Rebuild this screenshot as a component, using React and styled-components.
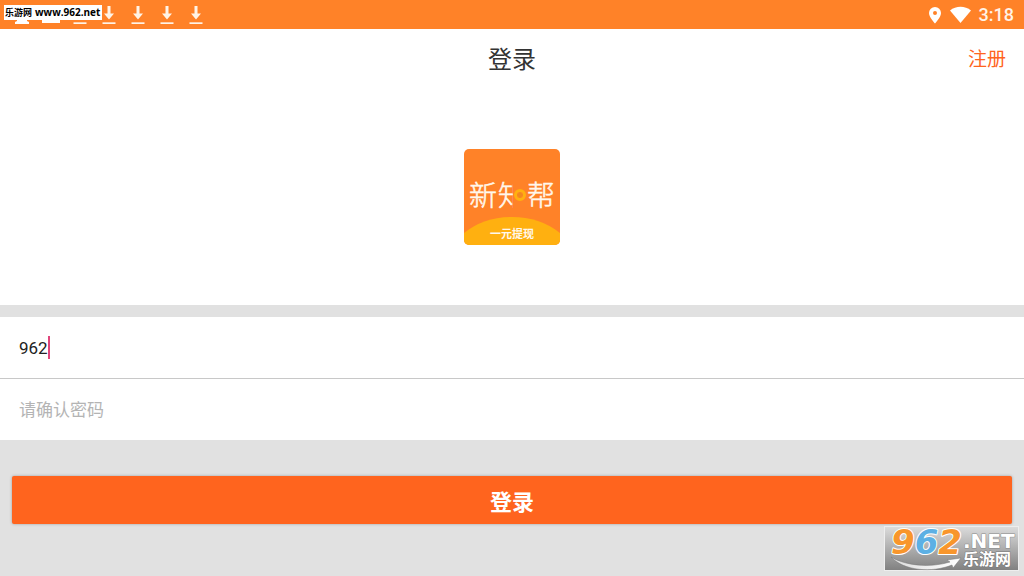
import React, { useState } from "react";
import styled, { createGlobalStyle } from "styled-components";

const GlobalStyle = createGlobalStyle`
  * { box-sizing: border-box; }
  body {
    margin: 0;
    background: #e1e1e1;
    font-family: Roboto, "Noto Sans CJK SC", sans-serif;
  }
`;

const Page = styled.main`
  position: relative;
  min-height: 100vh;
  display: flex;
  flex-direction: column;
`;

const StatusBar = styled.div`
  position: relative;
  display: flex;
  align-items: center;
  justify-content: space-between;
  height: 29px;
  padding: 0 10px 0 7px;
  background: #ff8228;
  color: #fff;
`;

const Notifications = styled.div`
  display: flex;
`;

const IconCell = styled.span`
  display: flex;
  justify-content: center;
  width: 29px;
`;

const SystemIcons = styled.div`
  display: flex;
  align-items: center;
  gap: 7px;
`;

const Clock = styled.time`
  font-size: 18px;
  line-height: 30px;
  font-weight: 500;
  color: #fff3e6;
`;

const SiteTag = styled.div`
  position: absolute;
  left: 4px;
  top: 5px;
  display: flex;
  align-items: center;
  gap: 3px;
  width: 98px;
  height: 15px;
  padding-left: 1px;
  background: #fff;
  color: #000;
  font: 700 10px/15px "Open Sans", sans-serif;
  white-space: nowrap;
`;

const SiteTagName = styled.span`
  font: 700 9px/15px "Noto Sans CJK SC", sans-serif;
`;

const Hero = styled.section`
  background: #fff;
  padding-bottom: 60px;
`;

const Header = styled.header`
  display: grid;
  grid-template-columns: 1fr auto 1fr;
  align-items: center;
  height: 62px;
  padding: 0 18px;
`;

const Title = styled.h1`
  grid-column: 2;
  margin: 0;
  font-size: 24px;
  line-height: 36px;
  font-weight: 400;
  color: #333;
`;

const RegisterLink = styled.a`
  justify-self: end;
  font-size: 19px;
  line-height: 28px;
  color: #ff641e;
  text-decoration: none;
`;

const Logo = styled.svg`
  display: block;
  width: 96px;
  height: 96px;
  margin: 58px auto 0;
  border-radius: 5px;
`;

const Form = styled.form`
  display: flex;
  flex-direction: column;
  margin-top: 12px;
`;

const Field = styled.label`
  display: flex;
  align-items: center;
  height: ${(p) => (p.$divided ? 62 : 61)}px;
  padding: 0 19px;
  background: #fff;
  border-bottom: ${(p) => (p.$divided ? "1px solid #c8c8c8" : "0")};
`;

const TextInput = styled.input`
  field-sizing: ${(p) => (p.$fit ? "content" : "fixed")};
  flex: ${(p) => (p.$fit ? "0 1 auto" : "1")};
  min-width: 0;
  height: 26px;
  padding: 0;
  border: 0;
  outline: 0;
  background: transparent;
  font: 400 17px/26px Roboto, "Noto Sans CJK SC", sans-serif;
  color: #222;
  caret-color: transparent;

  &::placeholder {
    color: #b4b4b4;
    opacity: 1;
  }
`;

const Caret = styled.span`
  width: 2px;
  height: 23px;
  background: #e0457b;
`;

const SubmitButton = styled.button`
  height: 48px;
  margin: 36px 12px 0;
  padding: 0;
  border: 0;
  border-radius: 2px;
  background: #ff641e;
  box-shadow: 0 0 3px rgba(0, 0, 0, 0.3);
  color: #fff;
  font: 700 22px/48px "Noto Sans CJK SC", sans-serif;
`;

const Watermark = styled.svg`
  position: absolute;
  right: 5px;
  bottom: 5px;
  width: 135px;
  height: 45px;
  overflow: visible;
`;

function DownloadIcon() {
  return (
    <svg width="14" height="22" viewBox="0 0 14 22" fill="#fff3e6" aria-hidden="true">
      <path d="M5.500 2h3v7.500H12L7 15.500 2 9.500h3.500z" />
      <path d="M0.500 18.300h13v1.700h-13z" />
    </svg>
  );
}

function RobotIcon() {
  return (
    <svg width="18" height="22" viewBox="0 0 18 22" fill="#fff" aria-hidden="true">
      <path d="M4 6a5 5 0 0 1 10 0v11l2 1v2H2v-2l2-1z" />
    </svg>
  );
}

function PictureIcon() {
  return (
    <svg width="20" height="22" viewBox="0 0 20 22" fill="#fff" aria-hidden="true">
      <path d="M1 3h18v16H1z" />
    </svg>
  );
}

function PinIcon() {
  return (
    <svg width="14" height="18" viewBox="0 0 14 18" fill="#fff" aria-hidden="true">
      <path
        fillRule="evenodd"
        d="M7 1a6 6 0 0 0-6 6c0 4.300 6 10.500 6 10.500S13 11.300 13 7a6 6 0 0 0-6-6zm0 4a2 2 0 1 1 0 4 2 2 0 0 1 0-4z"
      />
    </svg>
  );
}

function WifiIcon() {
  return (
    <svg width="23" height="18" viewBox="0 0 23 18" fill="#fff" aria-hidden="true">
      <path d="M1 4.500C7 -0.500 16 -0.500 22 4.500L11.500 17z" />
    </svg>
  );
}

function AppLogo() {
  const glyphs = {
    fill: "#fff8ec",
    fontFamily: '"Noto Sans CJK SC", sans-serif',
  };
  return (
    <Logo viewBox="0 0 96 96" role="img" aria-label="新知帮">
      <rect width="96" height="96" fill="#ff8228" />
      <path d="M0 84Q20 68 48 68T96 84V96H0z" fill="#ffb010" />
      <g {...glyphs} fontSize="28" fontWeight="300" stroke="#fff8ec" strokeWidth="0.500">
        <text x="5" y="57">新</text>
        <text x="34" y="57">知</text>
        <rect x="49" y="30" width="14" height="32" fill="#ff8228" stroke="none" />
        <text x="63" y="57">帮</text>
      </g>
      <circle cx="56" cy="46" r="4.500" fill="none" stroke="#ffb010" strokeWidth="3" />
      <path d="M56 43l3 3-3 3-3-3z" fill="#f08a1c" />
      <text {...glyphs} x="48" y="89" fontSize="11" fontWeight="700" textAnchor="middle">
        一元提现
      </text>
    </Logo>
  );
}

function SiteWatermark() {
  return (
    <Watermark viewBox="0 0 135 45" role="img" aria-label="962.NET 乐游网">
      <defs>
        <linearGradient id="plate" x1="0" y1="0" x2="0" y2="1">
          <stop offset="0" stopColor="#dcdcdc" />
          <stop offset="1" stopColor="#808080" />
        </linearGradient>
        <linearGradient id="swoosh" x1="0" y1="0" x2="1" y2="0">
          <stop offset="0" stopColor="#dcdcdc" />
          <stop offset="1" stopColor="#fff" />
        </linearGradient>
      </defs>
      <rect x="0.500" y="0.500" width="134" height="44" fill="url(#plate)" stroke="#eee" />
      <path
        d="M7 31C22 40 46 42 66 36l-3-2 14-2-8 10-1-3C48 47 20 45 7 31z"
        fill="url(#swoosh)"
        stroke="#777"
        strokeWidth="0.500"
      />
      <g
        fontFamily='"DejaVu Sans", sans-serif'
        fontWeight="700"
        stroke="#fff"
        strokeWidth="2"
        strokeLinejoin="round"
        paintOrder="stroke"
      >
        <text x="7" y="28" fontSize="34" fontStyle="italic">
          <tspan fill="#f8962c">9</tspan>
          <tspan fill="#5cb0e4">6</tspan>
          <tspan fill="#f8962c">2</tspan>
        </text>
        <text x="79" y="22" fontSize="20" fill="#fff" stroke="#888" strokeWidth="1">
          .NET
        </text>
      </g>
      <text
        x="79"
        y="39"
        fontSize="16"
        fontWeight="700"
        fontFamily='"Noto Sans CJK SC", sans-serif'
        fill="#fff"
        stroke="#777"
        strokeWidth="1"
        paintOrder="stroke"
      >
        乐游网
      </text>
    </Watermark>
  );
}

export default function App() {
  const [account, setAccount] = useState("962");
  const [password, setPassword] = useState("");

  return (
    <>
      <GlobalStyle />
      <Page>
        <StatusBar>
          <Notifications>
            <IconCell><RobotIcon /></IconCell>
            <IconCell><PictureIcon /></IconCell>
            {[0, 1, 2, 3, 4].map((n) => (
              <IconCell key={n}><DownloadIcon /></IconCell>
            ))}
          </Notifications>
          <SystemIcons>
            <PinIcon />
            <WifiIcon />
            <Clock>3:18</Clock>
          </SystemIcons>
          <SiteTag>
            <SiteTagName>乐游网</SiteTagName>
            <span>www.962.net</span>
          </SiteTag>
        </StatusBar>
        <Hero>
          <Header>
            <Title>登录</Title>
            <RegisterLink href="#register">注册</RegisterLink>
          </Header>
          <AppLogo />
        </Hero>
        <Form onSubmit={(e) => e.preventDefault()}>
          <Field $divided>
            <TextInput
              $fit
              type="text"
              aria-label="账号"
              value={account}
              onChange={(e) => setAccount(e.target.value)}
            />
            <Caret />
          </Field>
          <Field>
            <TextInput
              type="password"
              aria-label="密码"
              placeholder="请确认密码"
              value={password}
              onChange={(e) => setPassword(e.target.value)}
            />
          </Field>
          <SubmitButton type="submit">登录</SubmitButton>
        </Form>
        <SiteWatermark />
      </Page>
    </>
  );
}
